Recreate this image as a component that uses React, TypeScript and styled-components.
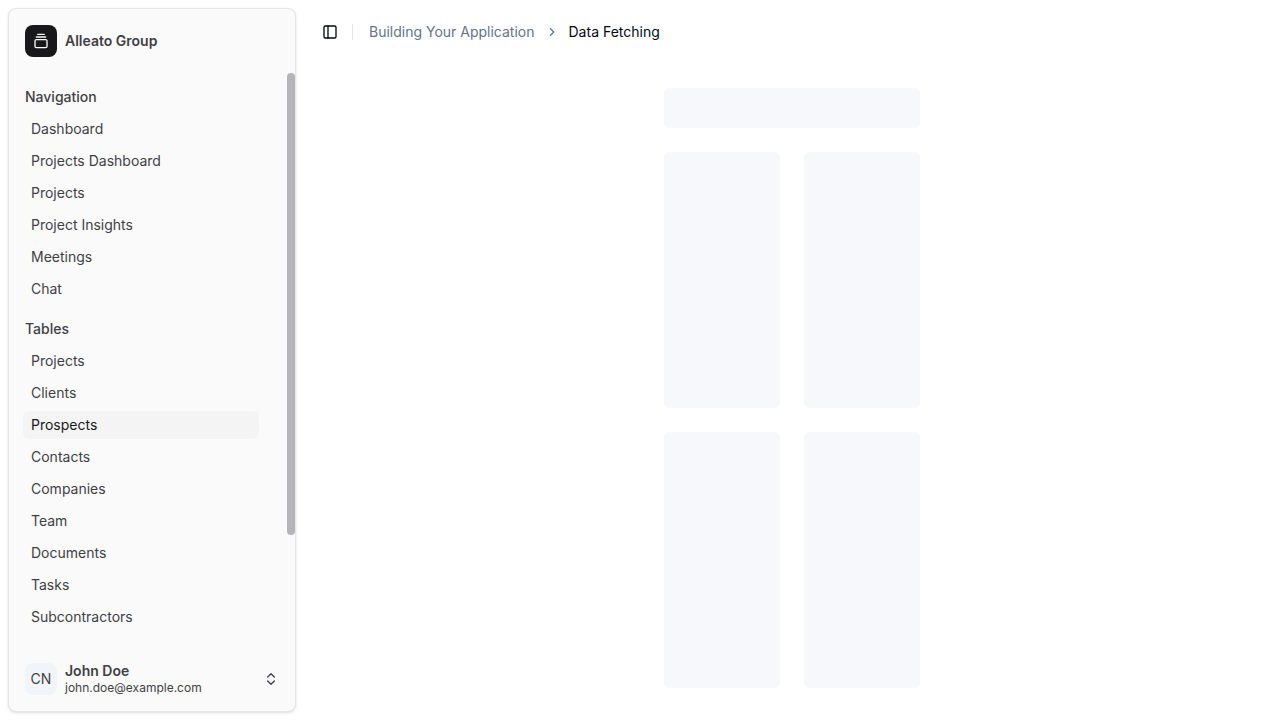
import React from "react";
import styled, { createGlobalStyle } from "styled-components";
import { ChevronRight, ChevronsUpDown, GalleryVerticalEnd, PanelLeft } from "lucide-react";

const GlobalStyle = createGlobalStyle`
  *, *::before, *::after { box-sizing: border-box; }
  body {
    margin: 0;
    overflow: hidden;
    background: #fff;
    color: #020817;
    font-family: Inter, "Liberation Sans", sans-serif;
    font-size: 14px;
    line-height: 20px;
    -webkit-font-smoothing: antialiased;
  }
`;

const Shell = styled.div`
  display: flex;
  width: 100%;
  height: 100vh;
`;

const SidebarPane = styled.aside`
  flex: none;
  width: 304px;
  padding: 8px;
`;

const SidebarCard = styled.div`
  display: flex;
  flex-direction: column;
  width: 288px;
  height: 100%;
  border: 1px solid #e5e7eb;
  border-radius: 8px;
  background: #fafafa;
  color: #3f3f46;
  box-shadow: 0 1px 3px 0 rgba(0, 0, 0, 0.1), 0 1px 2px -1px rgba(0, 0, 0, 0.1);
`;

const Brand = styled.header`
  display: flex;
  align-items: center;
  gap: 8px;
  flex: none;
  height: 64px;
  padding: 0 16px;
  font-weight: 600;
`;

const Logo = styled.div`
  display: flex;
  align-items: center;
  justify-content: center;
  width: 32px;
  height: 32px;
  border-radius: 8px;
  background: #18181b;
  color: #fafafa;
`;

const Scroller = styled.div`
  display: flex;
  flex: 1;
  min-height: 0;
`;

const Groups = styled.nav`
  flex: 1;
  padding: 8px 28px 0 14px;
  overflow: hidden;
`;

const Group = styled.section`
  margin-bottom: 8px;
`;

const GroupLabel = styled.div`
  height: 32px;
  padding: 6px 2px;
  font-weight: 500;
`;

const Items = styled.ul`
  display: flex;
  flex-direction: column;
  gap: 4px;
  margin: 0;
  padding: 2px 0;
  list-style: none;
`;

const Item = styled.li<{ $active?: boolean }>`
  height: 28px;
  padding: 4px 8px;
  border-radius: 6px;
  background: ${(p) => (p.$active ? "#f4f4f5" : "transparent")};
  color: ${(p) => (p.$active ? "#18181b" : "inherit")};
`;

const Thumb = styled.div`
  width: 8px;
  height: 462px;
  border-radius: 4px;
  background: #b4b4ba;
`;

const User = styled.footer`
  display: flex;
  align-items: center;
  gap: 8px;
  flex: none;
  height: 64px;
  padding: 0 16px;
`;

const Avatar = styled.div`
  display: flex;
  align-items: center;
  justify-content: center;
  width: 32px;
  height: 32px;
  border-radius: 8px;
  background: #f1f5f9;
`;

const Identity = styled.div`
  flex: 1;
  line-height: 17.5px;
`;

const Name = styled.div`
  font-weight: 600;
`;

const Email = styled.div`
  font-size: 12px;
  line-height: 16px;
`;

const Main = styled.main`
  flex: 1;
`;

const TopBar = styled.header`
  display: flex;
  align-items: center;
  height: 64px;
  padding-left: 18px;
`;

const Divider = styled.span`
  width: 1px;
  height: 16px;
  margin: 0 16px 0 14px;
  background: #e2e8f0;
`;

const Crumbs = styled.nav`
  display: flex;
  align-items: center;
  gap: 10px;
  color: #64748b;
`;

const Current = styled.span`
  color: #020817;
`;

const Placeholders = styled.div`
  display: grid;
  grid-template-columns: 116px 116px;
  grid-template-rows: 40px 256px 256px;
  gap: 24px;
  width: 256px;
  margin: 24px auto 0;
`;

const Placeholder = styled.div<{ $wide?: boolean }>`
  grid-column: ${(p) => (p.$wide ? "span 2" : "auto")};
  border-radius: 6px;
  background: #f7f8fc;
`;

const sections = [
  { title: "Navigation", items: ["Dashboard", "Projects Dashboard", "Projects", "Project Insights", "Meetings", "Chat"] },
  { title: "Tables", items: ["Projects", "Clients", "Prospects", "Contacts", "Companies", "Team", "Documents", "Tasks", "Subcontractors"] },
];

export default function App() {
  return (
    <>
      <GlobalStyle />
      <Shell>
        <SidebarPane>
          <SidebarCard>
            <Brand>
              <Logo><GalleryVerticalEnd size={16} /></Logo>
              <span>Alleato Group</span>
            </Brand>
            <Scroller>
              <Groups>
                {sections.map((section) => (
                  <Group key={section.title}>
                    <GroupLabel>{section.title}</GroupLabel>
                    <Items>
                      {section.items.map((item) => (
                        <Item key={item} $active={item === "Prospects"}>{item}</Item>
                      ))}
                    </Items>
                  </Group>
                ))}
              </Groups>
              <Thumb />
            </Scroller>
            <User>
              <Avatar>CN</Avatar>
              <Identity>
                <Name>John Doe</Name>
                <Email>john.doe@example.com</Email>
              </Identity>
              <ChevronsUpDown size={16} />
            </User>
          </SidebarCard>
        </SidebarPane>
        <Main>
          <TopBar>
            <PanelLeft size={16} />
            <Divider />
            <Crumbs>
              <span>Building Your Application</span>
              <ChevronRight size={14} />
              <Current>Data Fetching</Current>
            </Crumbs>
          </TopBar>
          <Placeholders>
            <Placeholder $wide />
            <Placeholder />
            <Placeholder />
            <Placeholder />
            <Placeholder />
          </Placeholders>
        </Main>
      </Shell>
    </>
  );
}
